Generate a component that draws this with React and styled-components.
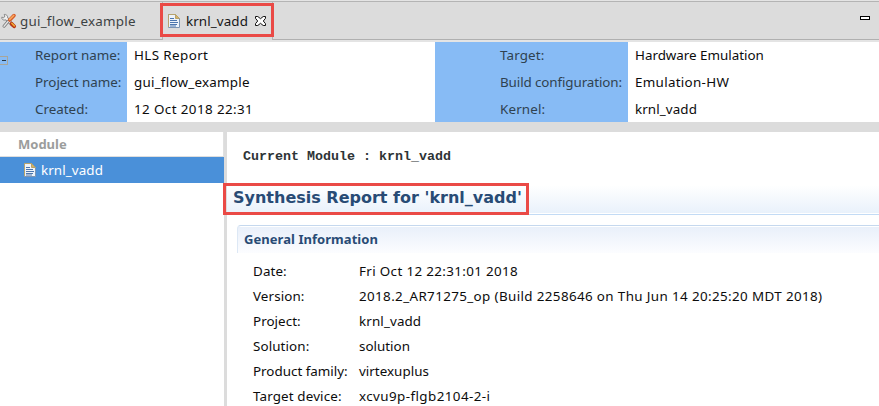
import React from "react";
import styled, { createGlobalStyle } from "styled-components";

const GlobalStyle = createGlobalStyle`
  * { box-sizing: border-box; }
  body { margin: 0; background: #fff; overflow: hidden; }
`;

const Window = styled.div`
  display: flex;
  flex-direction: column;
  width: 879px;
  height: 406px;
  overflow: hidden;
  background: #dcdcdc;
  color: #0c0c0c;
  font: 13.4px "Noto Sans", sans-serif;
  white-space: nowrap;
`;

const Label = styled.span`
  letter-spacing: ${(p) => p.$track || 0}px;
`;

const TabBar = styled.div`
  display: flex;
  flex: none;
  height: 42px;
  padding-top: 2px;
  background: linear-gradient(
    #e4e4e4 0 1px, #b4b4b4 1px 2px, #dcdcdc 2px 39px, #b0b0b0 39px 40px, #e4e4e4 40px
  );
`;

const Tab = styled.div`
  position: relative;
  display: flex;
  align-items: center;
  height: 38px;
  padding-bottom: 1px;
  width: ${(p) => p.$width}px;
  padding-left: ${(p) => p.$inset}px;
  color: ${(p) => (p.$active ? "#161616" : "#3c4243")};
  background: ${(p) => (p.$active ? "#dcdcdc" : "transparent")};
  border: solid #b4b4b4;
  border-width: ${(p) => (p.$active ? "0 1px" : "0")};
  svg { flex: none; }
`;

const TabCaption = styled(Label)`
  margin-left: ${(p) => p.$gap}px;
  width: ${(p) => p.$width}px;
`;

const TabHighlight = styled.div`
  position: absolute;
  left: -3px;
  top: 1px;
  width: 114px;
  height: 34px;
  border: 3px solid #ea4a46;
`;

const TitleHighlight = styled.div`
  position: absolute;
  left: -4px;
  top: -2px;
  width: 306px;
  height: 32px;
  border: 3px solid #ea4a46;
`;

const MinimizeButton = styled.button`
  width: 10px;
  height: 4px;
  margin: 14px 9px 0 auto;
  padding: 0;
  border: 1px solid #000;
  background: #fff;
`;

const Summary = styled.section`
  display: grid;
  grid-template-columns: 127px 308px 193px 1fr;
  flex: none;
  height: 80px;
  background: #fff;
  overflow: hidden;
`;

const SummaryNames = styled.div`
  position: relative;
  padding-left: ${(p) => p.$inset}px;
  background: #87bbf5;
  color: #2f4250;
`;

const SummaryValues = styled.div`
  padding-left: 7px;
`;

const SummaryLine = styled.div`
  height: 27px;
  line-height: 27px;
`;

const Collapser = styled.span`
  position: absolute;
  left: -1px;
  top: 14px;
  width: 9px;
  height: 9px;
  border: 1px solid #a8a69c;
  &::after {
    content: "";
    position: absolute;
    left: 2px;
    top: 3px;
    width: 4px;
    height: 1px;
    background: #263746;
  }
`;

const Workspace = styled.div`
  display: grid;
  grid-template-columns: 224px 1fr;
  column-gap: 3px;
  flex: 1;
  min-height: 0;
  margin-top: 10px;
`;

const ModulePane = styled.aside`
  background: #fff;
`;

const ModuleHeader = styled.div`
  height: 25px;
  padding-left: 18px;
  font-size: 13px;
  line-height: 24px;
  font-weight: bold;
  color: #9b9d9c;
  border-right: 1px solid #e0e0e0;
  border-bottom: 1px solid #dedede;
`;

const ModuleRow = styled.div`
  display: flex;
  align-items: center;
  gap: 5px;
  height: 26px;
  padding: 0 0 0 24px;
  background: #4a90d9;
  color: #fff;
`;

const ReportPane = styled.main`
  min-width: 0;
  background: #fff;
`;

const CurrentModule = styled.div`
  height: 53px;
  padding: 17px 0 0 16px;
  font: bold 13.33px/16px "Liberation Mono", monospace;
  color: #2e3436;
`;

const ReportTitle = styled.h1`
  position: relative;
  height: 30px;
  margin: 0;
  padding-left: 6px;
  font: bold 16px/25px "DejaVu Sans", sans-serif;
  color: #284b75;
  background: linear-gradient(#fff, #e9f1fb 28px, #fff 28px, #fff 29px, #c3dbf5 29px);
`;

const Section = styled.section`
  margin: 10px 0 0 10px;
`;

const SectionTitle = styled.h2`
  height: 28px;
  margin: 0;
  padding-left: 6px;
  font-size: 13px;
  line-height: 26px;
  color: #284b75;
  border-top: 1px solid #c5d8ee;
  border-left: 1px solid #dde8f5;
  border-radius: 4px 0 0 0;
  background: linear-gradient(#fff 0 1px, #e9f0fa 1px, #fcfdff);
`;

const Facts = styled.dl`
  display: grid;
  grid-template-columns: 106px 1fr;
  grid-auto-rows: 25px;
  margin: 6px 0 0 16px;
  line-height: 25px;
`;

const FactName = styled.dt`
  letter-spacing: ${(p) => p.$track}px;
`;

const FactValue = styled.dd`
  margin: 0;
  letter-spacing: ${(p) => p.$track}px;
`;

const DocumentIcon = () => (
  <svg width="12" height="14" viewBox="0 0 12 14">
    <path d="M.5.5h7l4 4v9H.5z" fill="#edf3fa" stroke="#7b94b4" />
    <path d="M.5 13V.5h7l4 4" fill="none" stroke="#b7a36d" />
    <path d="M7.5.5v4h4z" fill="#d8b365" stroke="#b7a36d" />
    <path d="M2 4.5h4M2 6.5h7M2 8.5h8M2 10.5h7M2 12h6" stroke="#4d76ae" />
  </svg>
);

const ToolsIcon = () => (
  <svg width="16" height="16" viewBox="0 0 16 16">
    <path d="M4.5 4.5l6.5 7" stroke="#777" strokeWidth="3.6" strokeLinecap="round" />
    <path d="M3.2 1.4l.9 2.2-1.3 1.2-2-.7C.4 6 2 7.5 4.2 7l2.5-2.1C6.8 2.7 5.3 1 3.2 1.4z" fill="#f2f2f2" stroke="#777" strokeWidth=".8" />
    <path d="M4.5 4.5l6.5 7" stroke="#efefef" strokeWidth="2.2" strokeLinecap="round" />
    <path d="M7.5 8L3 13.2" stroke="#777" strokeWidth="3" strokeLinecap="round" />
    <path d="M7.5 8L3 13.2" stroke="#e5e5e5" strokeWidth="1.4" strokeLinecap="round" />
    <path d="M8.7 7l4.3-4.4" stroke="#d65a2a" strokeWidth="3.6" strokeLinecap="round" />
    <path d="M8.7 6.4l4-3.9" stroke="#f7a85c" strokeWidth="1.7" strokeLinecap="round" />
    <path d="M10.6 10.7l2.5 2.6" stroke="#b93112" strokeWidth="3.8" strokeLinecap="round" />
    <path d="M10.8 10.3l2.5 2.6" stroke="#efaa35" strokeWidth="1.6" strokeLinecap="round" />
  </svg>
);

const CloseIcon = () => (
  <svg width="11" height="10" viewBox="0 0 11 10">
    <path
      d="M.5.5h2.3l2.7 2.2L8.2.5h2.3v1.8L8.3 5l2.2 2.7v1.8H8.2L5.5 7.3 2.8 9.5H.5V7.7L2.7 5 .5 2.3z"
      fill="#fff"
      stroke="#111"
    />
  </svg>
);

const SUMMARY = [
  {
    inset: 35,
    collapsible: true,
    names: [["Report name:", -0.02], ["Project name:", -0.02], ["Created:", 0]],
    values: [["HLS Report", 0.4], ["gui_flow_example", 0.24], ["12 Oct 2018 22:31", 0.4]],
  },
  {
    inset: 65,
    names: [["Target:", 0.15], ["Build configuration:", -0.1], ["Kernel:", 0.15]],
    values: [["Hardware Emulation", -0.02], ["Emulation-HW", 0.3], ["krnl_vadd", 0.09]],
  },
];

const FACTS = [
  ["Date:", 0.1, "Fri Oct 12 22:31:01 2018", 0.35],
  ["Version:", 0.1, "2018.2_AR71275_op (Build 2258646 on Thu Jun 14 20:25:20 MDT 2018)", 0.375],
  ["Project:", 0.05, "krnl_vadd", 0.12],
  ["Solution:", 0.1, "solution", 0],
  ["Product family:", 0, "virtexuplus", 0.02],
  ["Target device:", 0.14, "xcvu9p-flgb2104-2-i", 0.42],
];

export default function App() {
  return (
    <Window>
      <GlobalStyle />
      <TabBar>
        <Tab $width={162} $inset={1}>
          <ToolsIcon />
          <TabCaption $track={0.24} $gap={3}>gui_flow_example</TabCaption>
        </Tab>
        <Tab $active $width={111} $inset={5}>
          <DocumentIcon />
          <TabCaption $track={0.09} $gap={6} $width={69}>krnl_vadd</TabCaption>
          <CloseIcon />
          <TabHighlight />
        </Tab>
        <MinimizeButton aria-label="Minimize" />
      </TabBar>
      <Summary>
        {SUMMARY.map((group) => (
          <React.Fragment key={group.inset}>
            <SummaryNames $inset={group.inset}>
              {group.collapsible && <Collapser />}
              {group.names.map(([text, track]) => (
                <SummaryLine key={text}><Label $track={track}>{text}</Label></SummaryLine>
              ))}
            </SummaryNames>
            <SummaryValues>
              {group.values.map(([text, track]) => (
                <SummaryLine key={text}><Label $track={track}>{text}</Label></SummaryLine>
              ))}
            </SummaryValues>
          </React.Fragment>
        ))}
      </Summary>
      <Workspace>
        <ModulePane>
          <ModuleHeader>Module</ModuleHeader>
          <ModuleRow>
            <DocumentIcon />
            <Label $track={0.09}>krnl_vadd</Label>
          </ModuleRow>
        </ModulePane>
        <ReportPane>
          <CurrentModule>Current Module : krnl_vadd</CurrentModule>
          <ReportTitle>
            Synthesis Report for 'krnl_vadd'
            <TitleHighlight />
          </ReportTitle>
          <Section>
            <SectionTitle><Label $track={0.05}>General Information</Label></SectionTitle>
            <Facts>
              {FACTS.map(([name, nameTrack, value, valueTrack]) => (
                <React.Fragment key={name}>
                  <FactName $track={nameTrack}>{name}</FactName>
                  <FactValue $track={valueTrack}>{value}</FactValue>
                </React.Fragment>
              ))}
            </Facts>
          </Section>
        </ReportPane>
      </Workspace>
    </Window>
  );
}
